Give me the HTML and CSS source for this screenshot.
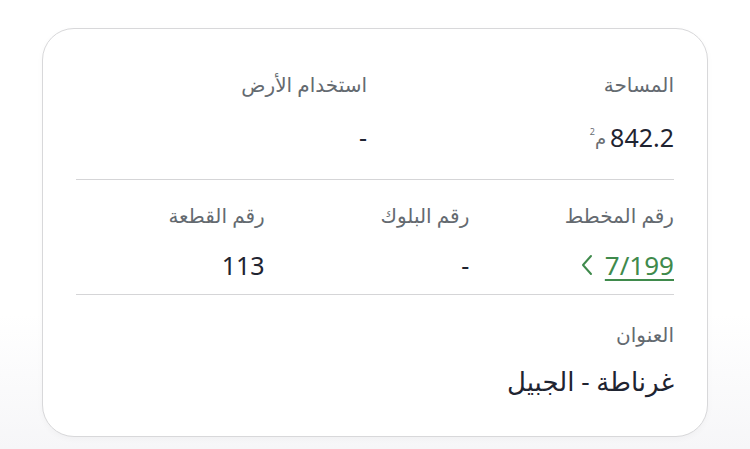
FILE: index.html
```html
<!DOCTYPE html>
<html lang="ar" dir="rtl">
<head>
<meta charset="utf-8">
<link rel="stylesheet" href="styles.css">
</head>
<body>
<div class="page">
  <div class="card">
    <div class="section sec-top">
      <div class="grid two">
        <div class="field">
          <div class="label">المساحة</div>
          <div class="value"><span class="num">842.2</span> <span class="unit">م<sup>2</sup></span></div>
        </div>
        <div class="field">
          <div class="label">استخدام الأرض</div>
          <div class="value">-</div>
        </div>
      </div>
    </div>
    <div class="section sec-mid">
      <div class="grid three">
        <div class="field">
          <div class="label">رقم المخطط</div>
          <div class="value link-row"><a class="link" href="#">7/199</a><svg class="chev" width="12" height="24" viewBox="0 0 12 24"><path d="M10 3 L2 12 L10 21" fill="none" stroke="#3f8a4c" stroke-width="2" stroke-linecap="round" stroke-linejoin="round"/></svg></div>
        </div>
        <div class="field">
          <div class="label">رقم البلوك</div>
          <div class="value">-</div>
        </div>
        <div class="field">
          <div class="label">رقم القطعة</div>
          <div class="value">113</div>
        </div>
      </div>
    </div>
    <div class="section sec-bottom">
      <div class="field">
        <div class="label">العنوان</div>
        <div class="value address">غرناطة - الجبيل</div>
      </div>
    </div>
  </div>
</div>
</body>
</html>
```
FILE: styles.css
```css
* { box-sizing: border-box; }
html, body { margin: 0; padding: 0; }
body {
  width: 750px;
  height: 449px;
  background: linear-gradient(#ffffff 0%, #ffffff 70%, #f6f6f8 100%);
  font-family: "Noto Sans", "DejaVu Sans", sans-serif;
  color: #1f2431;
  overflow: hidden;
}
.page {
  padding: 28px 42px 0 42px;
}
.card {
  height: 409px;
  background: #ffffff;
  border: 1px solid #d8d8da;
  border-radius: 32px;
  padding: 0 33px;
  box-shadow: 0 2px 6px rgba(0,0,0,0.03);
}
.section { border-bottom: 1px solid #d5d5d7; }
.sec-top { padding: 44px 0 26px; }
.sec-mid { padding: 24px 0 13px; }
.sec-bottom { padding: 28px 0 0; border-bottom: none; }
.grid { display: grid; column-gap: 16px; }
.two { grid-template-columns: 1fr 1fr; }
.three { grid-template-columns: 1fr 1fr 1fr; }
.field { display: flex; flex-direction: column; align-items: flex-start; }
.label {
  font-size: 20px;
  line-height: 24px;
  color: #646a70;
}
.sec-top .label { margin-bottom: 24px; }
.sec-mid .label { margin-bottom: 21px; }
.sec-bottom .label { margin-bottom: 18px; }
.value {
  font-size: 25px;
  line-height: 32px;
  color: #1f2431;
  display: flex;
  align-items: center;
  gap: 4px;
}
.unit {
  font-size: 18px;
  color: #6a6e73;
  line-height: 1;
}
.unit sup { font-size: 9px; vertical-align: 10px; }
.link-row { gap: 12px; }
.link {
  font-size: 26px;
  color: #3f8a4c;
  text-decoration: underline;
  text-decoration-thickness: 1.5px;
  text-underline-offset: 4px;
}
.chev { display: block; }
.address { font-size: 26px; }
```
